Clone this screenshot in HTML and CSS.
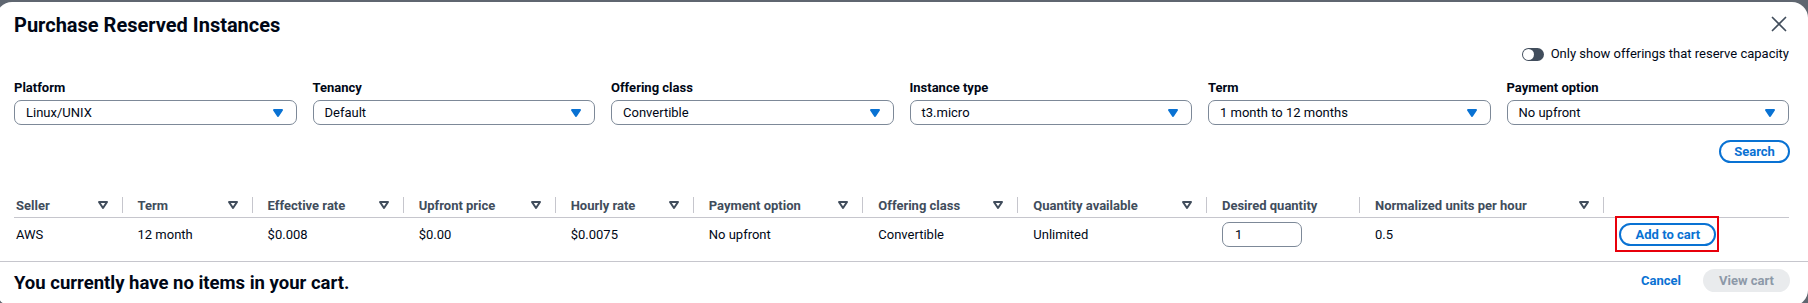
FILE: index.html
```html
<!DOCTYPE html>
<html lang="en">
<head>
<meta charset="utf-8">
<title>Purchase Reserved Instances</title>
<link rel="stylesheet" href="styles.css">
</head>
<body>
<div class="modal">
  <div class="modal-header">
    <h2 class="modal-title">Purchase Reserved Instances</h2>
    <button class="close-btn" aria-label="Close">
      <svg width="16" height="16" viewBox="0 0 16 16"><path d="M1.5 1.5l13 13M14.5 1.5l-13 13" fill="none" stroke="currentColor" stroke-width="1.7" stroke-linecap="round"/></svg>
    </button>
  </div>
  <div class="modal-body">
    <div class="toggle-row">
      <label class="toggle"><span class="toggle-track"><span class="toggle-knob"></span></span><span class="toggle-text">Only show offerings that reserve capacity</span></label>
    </div>
    <div class="filters">
      <div class="field"><div class="field-label">Platform</div><div class="select"><span>Linux/UNIX</span><svg class="caret" width="16" height="16" viewBox="0 0 16 16"><path d="M4 5h8l-4 6-4-6z" fill="currentColor" stroke="currentColor" stroke-width="2" stroke-linejoin="round"/></svg></div></div>
      <div class="field"><div class="field-label">Tenancy</div><div class="select"><span>Default</span><svg class="caret" width="16" height="16" viewBox="0 0 16 16"><path d="M4 5h8l-4 6-4-6z" fill="currentColor" stroke="currentColor" stroke-width="2" stroke-linejoin="round"/></svg></div></div>
      <div class="field"><div class="field-label">Offering class</div><div class="select"><span>Convertible</span><svg class="caret" width="16" height="16" viewBox="0 0 16 16"><path d="M4 5h8l-4 6-4-6z" fill="currentColor" stroke="currentColor" stroke-width="2" stroke-linejoin="round"/></svg></div></div>
      <div class="field"><div class="field-label">Instance type</div><div class="select"><span>t3.micro</span><svg class="caret" width="16" height="16" viewBox="0 0 16 16"><path d="M4 5h8l-4 6-4-6z" fill="currentColor" stroke="currentColor" stroke-width="2" stroke-linejoin="round"/></svg></div></div>
      <div class="field"><div class="field-label">Term</div><div class="select"><span>1 month to 12 months</span><svg class="caret" width="16" height="16" viewBox="0 0 16 16"><path d="M4 5h8l-4 6-4-6z" fill="currentColor" stroke="currentColor" stroke-width="2" stroke-linejoin="round"/></svg></div></div>
      <div class="field"><div class="field-label">Payment option</div><div class="select"><span>No upfront</span><svg class="caret" width="16" height="16" viewBox="0 0 16 16"><path d="M4 5h8l-4 6-4-6z" fill="currentColor" stroke="currentColor" stroke-width="2" stroke-linejoin="round"/></svg></div></div>
    </div>
    <div class="search-row"><button class="btn-normal">Search</button></div>
    <table class="offers">
      <colgroup>
        <col style="width:108.5px"><col style="width:130.1px"><col style="width:151.1px"><col style="width:152px"><col style="width:138.1px"><col style="width:169.5px"><col style="width:155px"><col style="width:188.7px"><col style="width:153px"><col style="width:244.4px"><col style="width:184.6px">
      </colgroup>
      <thead>
        <tr>
          <th><div class="th-in"><span>Seller</span><svg class="sort" width="16" height="16" viewBox="0 0 16 16"><path d="M4 5h8l-4 6-4-6z" fill="none" stroke="currentColor" stroke-width="2" stroke-linejoin="round"/></svg></div></th>
          <th><div class="th-in"><span>Term</span><svg class="sort" width="16" height="16" viewBox="0 0 16 16"><path d="M4 5h8l-4 6-4-6z" fill="none" stroke="currentColor" stroke-width="2" stroke-linejoin="round"/></svg></div></th>
          <th><div class="th-in"><span>Effective rate</span><svg class="sort" width="16" height="16" viewBox="0 0 16 16"><path d="M4 5h8l-4 6-4-6z" fill="none" stroke="currentColor" stroke-width="2" stroke-linejoin="round"/></svg></div></th>
          <th><div class="th-in"><span>Upfront price</span><svg class="sort" width="16" height="16" viewBox="0 0 16 16"><path d="M4 5h8l-4 6-4-6z" fill="none" stroke="currentColor" stroke-width="2" stroke-linejoin="round"/></svg></div></th>
          <th><div class="th-in"><span>Hourly rate</span><svg class="sort" width="16" height="16" viewBox="0 0 16 16"><path d="M4 5h8l-4 6-4-6z" fill="none" stroke="currentColor" stroke-width="2" stroke-linejoin="round"/></svg></div></th>
          <th><div class="th-in"><span>Payment option</span><svg class="sort" width="16" height="16" viewBox="0 0 16 16"><path d="M4 5h8l-4 6-4-6z" fill="none" stroke="currentColor" stroke-width="2" stroke-linejoin="round"/></svg></div></th>
          <th><div class="th-in"><span>Offering class</span><svg class="sort" width="16" height="16" viewBox="0 0 16 16"><path d="M4 5h8l-4 6-4-6z" fill="none" stroke="currentColor" stroke-width="2" stroke-linejoin="round"/></svg></div></th>
          <th><div class="th-in"><span>Quantity available</span><svg class="sort" width="16" height="16" viewBox="0 0 16 16"><path d="M4 5h8l-4 6-4-6z" fill="none" stroke="currentColor" stroke-width="2" stroke-linejoin="round"/></svg></div></th>
          <th><div class="th-in"><span>Desired quantity</span></div></th>
          <th><div class="th-in"><span>Normalized units per hour</span><svg class="sort" width="16" height="16" viewBox="0 0 16 16"><path d="M4 5h8l-4 6-4-6z" fill="none" stroke="currentColor" stroke-width="2" stroke-linejoin="round"/></svg></div></th>
          <th class="th-last"><div class="th-in"></div></th>
        </tr>
      </thead>
      <tbody>
        <tr>
          <td>AWS</td>
          <td>12 month</td>
          <td>$0.008</td>
          <td>$0.00</td>
          <td>$0.0075</td>
          <td>No upfront</td>
          <td>Convertible</td>
          <td>Unlimited</td>
          <td><input class="qty" type="text" value="1"></td>
          <td>0.5</td>
          <td><span class="highlight"><button class="btn-normal">Add to cart</button></span></td>
        </tr>
      </tbody>
    </table>
  </div>
  <div class="modal-footer">
    <div class="cart-msg">You currently have no items in your cart.</div>
    <div class="actions">
      <button class="btn-link">Cancel</button>
      <button class="btn-primary" disabled>View cart</button>
    </div>
  </div>
</div>
</body>
</html>
```
FILE: styles.css
```css
html, body {
  margin: 0;
  padding: 0;
  height: 100%;
  overflow: hidden;
}
body {
  background: #5f6670;
  font-family: Roboto, "Open Sans", sans-serif;
  font-size: 13px;
  color: #000716;
}
.modal {
  margin: 2px 0 0 -4px;
  height: 304px;
  background: #ffffff;
  border-radius: 16px;
  display: flex;
  flex-direction: column;
}
.modal-header {
  padding: 10px 19px 0 18px;
  display: flex;
  justify-content: space-between;
  align-items: center;
  height: 24px;
}
.modal-title {
  margin: 0;
  font-size: 20px;
  line-height: 24px;
  font-weight: 700;
  color: #000716;
  position: relative;
  top: 1px;
}
.close-btn {
  border: 0;
  background: none;
  padding: 0;
  width: 16px;
  height: 16px;
  margin-right: 2px;
  color: #414d5c;
  display: flex;
}
.modal-body {
  padding: 0 19px 11px 18px;
}
.toggle-row {
  margin-top: 8px;
  height: 20px;
  display: flex;
  justify-content: flex-end;
  align-items: center;
}
.toggle {
  display: flex;
  align-items: center;
  gap: 7px;
}
.toggle-track {
  width: 22px;
  height: 13px;
  border-radius: 7px;
  background: #414d5c;
  display: flex;
  align-items: center;
  padding: 0 1px;
  box-sizing: border-box;
}
.toggle-knob {
  width: 11px;
  height: 11px;
  border-radius: 50%;
  background: #ffffff;
}
.toggle-text {
  font-size: 13px;
  line-height: 20px;
}
.filters {
  margin-top: 15px;
  display: grid;
  grid-template-columns: repeat(6, 1fr);
  column-gap: 16px;
}
.field-label {
  font-weight: 700;
  line-height: 18px;
  margin-bottom: 3px;
}
.select {
  height: 25px;
  box-sizing: border-box;
  border: 1px solid #7d8998;
  border-radius: 7px;
  display: flex;
  align-items: center;
  justify-content: space-between;
  padding: 0 10px 0 11px;
}
.caret {
  color: #0972d3;
}
.search-row {
  margin-top: 15px;
  display: flex;
  justify-content: flex-end;
}
.btn-normal {
  font-family: inherit;
  font-size: 13px;
  font-weight: 700;
  color: #0972d3;
  background: #ffffff;
  border: 2px solid #0972d3;
  border-radius: 20px;
  height: 23px;
  padding: 0 12px;
  display: inline-flex;
  align-items: center;
  justify-content: center;
  box-sizing: border-box;
}
.search-row .btn-normal {
  width: 71px;
  margin-right: -1px;
}
.offers {
  margin-top: 30px;
  width: 100%;
  table-layout: fixed;
  border-collapse: collapse;
}
.offers th {
  padding: 4px 0;
  height: 24px;
  box-sizing: border-box;
  border-bottom: 1px solid #c6c6cd;
  text-align: left;
  font-weight: 700;
  color: #414d5c;
}
.th-in {
  height: 16px;
  border-right: 1px solid #c6c6cd;
  display: flex;
  align-items: center;
  justify-content: space-between;
  padding: 0 11px 0 15px;
  white-space: nowrap;
}
.offers th:first-child .th-in,
.offers td:first-child {
  padding-left: 2px;
}
.th-last .th-in {
  border-right: 0;
}
.sort {
  color: #414d5c;
  flex: none;
}
.offers td {
  height: 32px;
  padding: 0 0 0 15px;
  vertical-align: middle;
  white-space: nowrap;
}
.qty {
  width: 80px;
  height: 25px;
  box-sizing: border-box;
  border: 1px solid #7d8998;
  border-radius: 7px;
  padding: 0 0 0 12px;
  font-family: inherit;
  font-size: 13px;
  color: #000716;
  display: block;
}
.highlight {
  position: relative;
  display: inline-block;
  vertical-align: middle;
}
.highlight::after {
  content: "";
  position: absolute;
  top: -7px;
  bottom: -6px;
  left: -4px;
  right: -3px;
  border: 2px solid #e8000b;
}
.highlight .btn-normal {
  width: 97px;
  display: flex;
}
.modal-footer {
  border-top: 1px solid #c6c6cd;
  padding: 7px 18px 0 18px;
  display: flex;
  justify-content: space-between;
  align-items: center;
  height: 23px;
}
.cart-msg {
  font-size: 18.5px;
  font-weight: 700;
  line-height: 24px;
  margin-top: 4px;
}
.actions {
  display: flex;
  align-items: center;
  gap: 8px;
}
.btn-link {
  font-family: inherit;
  font-size: 13px;
  font-weight: 700;
  color: #0972d3;
  background: none;
  border: 0;
  padding: 0 14px;
  height: 23px;
}
.btn-primary {
  font-family: inherit;
  font-size: 13px;
  font-weight: 700;
  color: #8d99a8;
  background: #e9ebed;
  border: 0;
  border-radius: 20px;
  width: 87px;
  height: 23px;
}
```
